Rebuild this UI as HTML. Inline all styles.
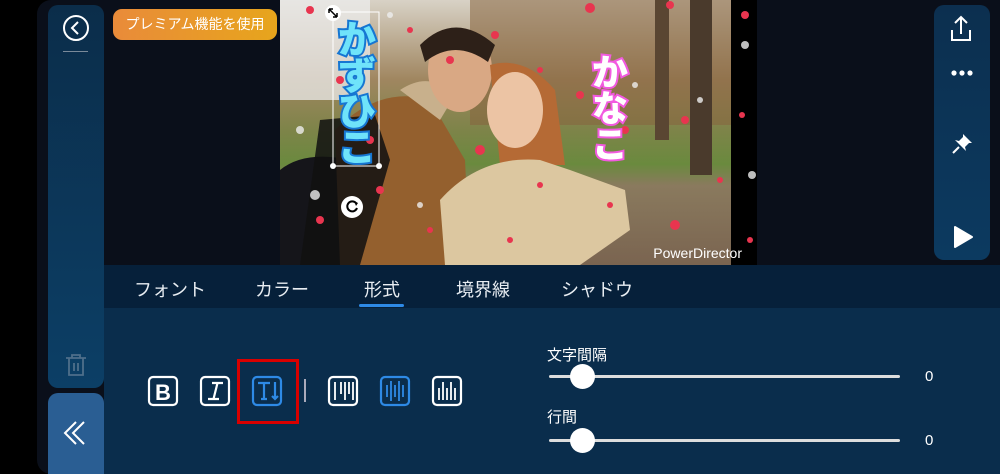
<!DOCTYPE html>
<html><head><meta charset="utf-8"><style>
*{margin:0;padding:0;box-sizing:border-box}
body{width:1000px;height:474px;background:#000;position:relative;overflow:hidden;font-family:"Liberation Sans","Noto Sans CJK JP",sans-serif;color:#fff}
.abs{position:absolute}
.tab{position:absolute;top:276px;font-size:18px;color:#e8edf2}
</style></head><body>
<div class="abs" style="left:37px;top:0;width:963px;height:474px;background:#0a0f1a;border-radius:14px 0 0 14px"></div>
<div class="abs" style="left:48px;top:5px;width:56px;height:383px;border-radius:10px;background:linear-gradient(#0b2d4a,#0c3f66)"></div>
<svg class="abs" style="left:62px;top:14px" width="28" height="28" viewBox="0 0 28 28"><circle cx="14" cy="14" r="12" fill="none" stroke="#fff" stroke-width="2"/><path d="M16 8 L10 14 L16 20" fill="none" stroke="#fff" stroke-width="2"/></svg>
<div class="abs" style="left:63px;top:51px;width:25px;height:1px;background:#7a8a9a"></div>
<svg class="abs" style="left:63px;top:352px" width="26" height="26" viewBox="0 0 26 26" fill="none" stroke="#4f6f8a" stroke-width="1.8"><path d="M3 6H23M9 6V3H17V6M6 6V23H20V6M11 11V19M15 11V19"/></svg>
<div class="abs" style="left:48px;top:393px;width:56px;height:81px;border-radius:10px 10px 0 0;background:#2a5e93"></div>
<svg class="abs" style="left:60px;top:418px" width="30" height="30" viewBox="0 0 30 30" fill="none" stroke="#fff" stroke-width="2"><path d="M16 4L5 15L16 26M24 4L13 15L24 26"/></svg>
<div class="abs" style="left:113px;top:9px;width:164px;height:31px;border-radius:9px;background:linear-gradient(90deg,#e98b3a,#e7a51c);font-size:14px;line-height:31px;text-align:center;color:#fff">プレミアム機能を使用</div>
<div class="abs" style="left:934px;top:5px;width:56px;height:255px;border-radius:10px;background:linear-gradient(#0c2f4f,#0c3a60)"></div>
<svg class="abs" style="left:948px;top:14px" width="26" height="28" viewBox="0 0 26 28" fill="none" stroke="#fff" stroke-width="2"><path d="M13 3V20M7 9L13 3L19 9M4 16V26H22V16"/></svg>
<svg class="abs" style="left:950px;top:69px" width="24" height="8"><circle cx="4" cy="4" r="2.6" fill="#fff"/><circle cx="12" cy="4" r="2.6" fill="#fff"/><circle cx="20" cy="4" r="2.6" fill="#fff"/></svg>
<svg class="abs" style="left:950px;top:132px" width="24" height="24" viewBox="0 0 24 24" fill="#fff"><path d="M13 2L22 11L19 11L15 15L16 19L5 8L9 9L13 5Z"/><path d="M9 15L3 21" stroke="#fff" stroke-width="2"/></svg>
<svg class="abs" style="left:952px;top:225px" width="22" height="24" viewBox="0 0 22 24"><path d="M3 2L20 12L3 22Z" fill="#fff" stroke="#fff" stroke-linejoin="round" stroke-width="2"/></svg>
<!-- photo -->
<svg class="abs" style="left:280px;top:0" width="477" height="265" viewBox="0 0 477 265">
<defs><linearGradient id="bg" x1="0" y1="0" x2="0" y2="1"><stop offset="0" stop-color="#d8d2c6"/><stop offset=".3" stop-color="#a08660"/><stop offset=".5" stop-color="#7c8448"/><stop offset=".62" stop-color="#6a8a3e"/><stop offset=".7" stop-color="#8a7a5e"/><stop offset="1" stop-color="#7a6450"/></linearGradient></defs>
<rect width="451" height="265" fill="url(#bg)"/>
<rect x="190" y="0" width="261" height="125" fill="#86643e" opacity=".55"/>
<rect x="0" y="0" width="90" height="100" fill="#ececec" opacity=".75"/>
<rect x="410" y="0" width="22" height="175" fill="#4a3a2c"/>
<rect x="375" y="0" width="14" height="140" fill="#5a4632"/>
<rect x="451" y="0" width="26" height="265" fill="#000"/>
<path d="M0 170Q25 150 70 160L90 265H0Z" fill="#15151a"/>
<path d="M55 130Q100 85 150 100L185 160L190 265H60Z" fill="#94602e"/>
<path d="M120 90Q150 70 175 95L160 120Z" fill="#c8b08c"/>
<ellipse cx="180" cy="70" rx="32" ry="42" fill="#d9a884"/>
<path d="M140 45Q175 10 215 45L208 62Q175 38 145 62Z" fill="#2d2018"/>
<path d="M40 120L95 115L110 160L80 265H20Z" fill="#111" opacity=".85"/>
<path d="M210 65Q245 55 275 90L285 165L220 165Z" fill="#b56a35"/>
<ellipse cx="235" cy="110" rx="28" ry="38" fill="#ecc4a4"/>
<path d="M160 200Q200 155 260 160L290 170L345 190L350 230L300 265H165Z" fill="#dcc7a0"/>
<g fill="#e8354f">
<circle cx="30" cy="10" r="4"/><circle cx="130" cy="30" r="3"/><circle cx="215" cy="35" r="4"/><circle cx="310" cy="8" r="5"/><circle cx="390" cy="5" r="4"/><circle cx="170" cy="60" r="4"/><circle cx="60" cy="80" r="4"/><circle cx="260" cy="70" r="3"/><circle cx="300" cy="95" r="4"/><circle cx="345" cy="130" r="4"/><circle cx="405" cy="120" r="4"/><circle cx="200" cy="150" r="5"/><circle cx="100" cy="190" r="4"/><circle cx="40" cy="220" r="4"/><circle cx="260" cy="185" r="3"/><circle cx="395" cy="225" r="5"/><circle cx="330" cy="205" r="3"/><circle cx="150" cy="230" r="3"/><circle cx="440" cy="180" r="3"/><circle cx="465" cy="15" r="4"/><circle cx="462" cy="115" r="3"/><circle cx="470" cy="240" r="3"/><circle cx="90" cy="140" r="4"/><circle cx="230" cy="240" r="3"/></g>
<g fill="#eee" opacity=".8"><circle cx="110" cy="15" r="3"/><circle cx="20" cy="130" r="4"/><circle cx="35" cy="195" r="5"/><circle cx="355" cy="85" r="3"/><circle cx="465" cy="45" r="4"/><circle cx="472" cy="175" r="4"/><circle cx="140" cy="205" r="3"/><circle cx="420" cy="100" r="3"/></g>
<text x="462" y="258" font-size="14" fill="#fff" text-anchor="end" font-family="Liberation Sans">PowerDirector</text>
<g font-family="Noto Sans CJK JP" font-size="38" font-weight="900" fill="#6fe3fa" stroke="#1676d2" stroke-width="4" paint-order="stroke" text-anchor="middle">
<text x="77" y="53">か</text><text x="77" y="89">ず</text><text x="77" y="125">ひ</text><text x="77" y="161">こ</text></g>
<g font-family="Noto Sans CJK JP" font-size="36" font-weight="900" fill="#fff" stroke="#f25ae0" stroke-width="4" paint-order="stroke" text-anchor="middle">
<text x="330" y="85">か</text><text x="330" y="121">な</text><text x="330" y="157">こ</text></g>
<rect x="53" y="12" width="46" height="154" fill="none" stroke="#fff" stroke-width="1"/>
<circle cx="53" cy="166" r="3" fill="#fff"/><circle cx="99" cy="166" r="3" fill="#fff"/>
<circle cx="53" cy="13" r="8" fill="#fff"/><path d="M49 9L57 17M49 9V13M49 9H53M57 17V13M57 17H53" stroke="#000" stroke-width="1.5"/>
<circle cx="72" cy="207" r="11" fill="#fff"/><path d="M76 203A5 5 0 1 0 77 208" fill="none" stroke="#000" stroke-width="2"/><path d="M74 201L78 203L76 206Z" fill="#000"/>
</svg>
<!-- bottom panel -->
<div class="abs" style="left:104px;top:265px;width:896px;height:43px;background:#06203a"></div>
<div class="abs" style="left:104px;top:308px;width:896px;height:166px;background:#0a2d4c"></div>
<div class="tab" style="left:134px">フォント</div>
<div class="tab" style="left:255px">カラー</div>
<div class="tab" style="left:364px">形式</div>
<div class="tab" style="left:456px">境界線</div>
<div class="tab" style="left:561px">シャドウ</div>
<div class="abs" style="left:359px;top:304px;width:45px;height:3px;border-radius:2px;background:#2e8ae6"></div>
<svg class="abs" style="left:146px;top:373px" width="330" height="36" viewBox="0 0 330 36" fill="none" stroke-width="2.2">
<rect x="3" y="4" width="28" height="28" rx="4" stroke="#fff"/>
<text x="17" y="27" font-size="22" font-weight="bold" fill="#fff" stroke="none" text-anchor="middle" font-family="Liberation Sans">B</text>
<rect x="55" y="4" width="28" height="28" rx="4" stroke="#fff"/>
<path d="M66 10H77M62 26H73M71.5 10L67.5 26" stroke="#fff"/>
<rect x="107" y="4" width="28" height="28" rx="4" stroke="#2e8ae6"/>
<path d="M112 10H124M118 10V26M115 26H121M129 9V26M126 23L129 26L132 23" stroke="#2e8ae6"/>
<rect x="183" y="4" width="28" height="28" rx="4" stroke="#fff"/>
<path d="M189 9V27M195 9V21M199 9V27M203 9V21M207 9V27" stroke="#fff" stroke-width="1.8"/>
<rect x="235" y="4" width="28" height="28" rx="4" stroke="#2e8ae6"/>
<path d="M241 12V24M245 8V28M249 12V24M253 8V28M257 12V24" stroke="#2e8ae6" stroke-width="1.8"/>
<rect x="287" y="4" width="28" height="28" rx="4" stroke="#fff"/>
<path d="M293 15V27M297 9V27M301 15V27M305 9V27M309 15V27" stroke="#fff" stroke-width="1.8"/>
</svg>
<div class="abs" style="left:237px;top:359px;width:62px;height:65px;border:3px solid #d90000"></div>
<div class="abs" style="left:304px;top:379px;width:2px;height:23px;background:#aab"></div>
<div class="abs" style="left:547px;top:344px;font-size:15px">文字間隔</div>
<div class="abs" style="left:549px;top:375px;width:351px;height:3px;background:#ddd;border-radius:2px"></div>
<div class="abs" style="left:570px;top:364px;width:25px;height:25px;border-radius:50%;background:#fff"></div>
<div class="abs" style="left:925px;top:368px;font-size:15px">0</div>
<div class="abs" style="left:547px;top:406px;font-size:15px">行間</div>
<div class="abs" style="left:549px;top:439px;width:351px;height:3px;background:#ddd;border-radius:2px"></div>
<div class="abs" style="left:570px;top:428px;width:25px;height:25px;border-radius:50%;background:#fff"></div>
<div class="abs" style="left:925px;top:432px;font-size:15px">0</div>
</body></html>
